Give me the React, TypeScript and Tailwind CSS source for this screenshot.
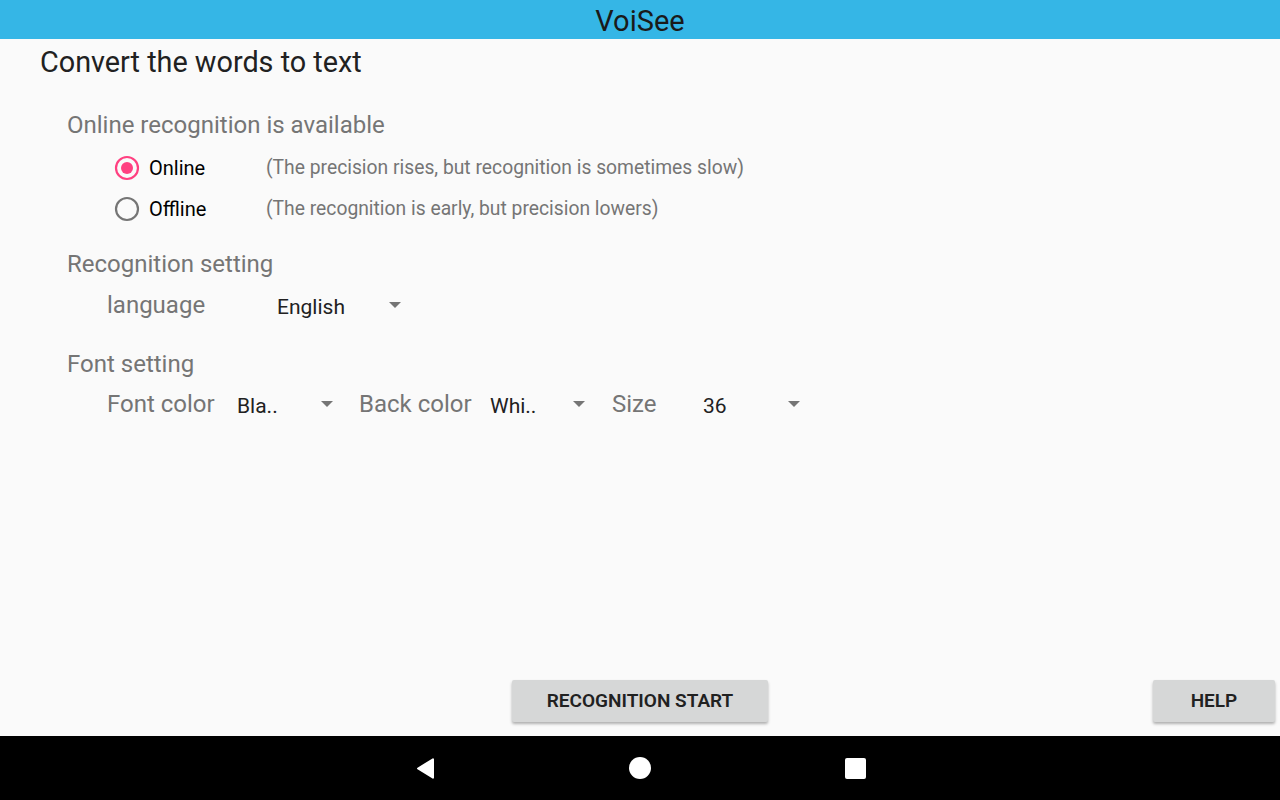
const Arrow = () => (
  <svg width="14" height="8" viewBox="0 0 14 8" className="shrink-0">
    <path d="M1 1h12L7 7z" fill="#757575" />
  </svg>
);

const Radio = ({ checked }: { checked: boolean }) => (
  <svg width="26" height="26" viewBox="0 0 26 26" className="shrink-0">
    <circle cx="13" cy="13" r="11" fill="none" stroke={checked ? "#ff4081" : "#757575"} strokeWidth="2.2" />
    {checked && <circle cx="13" cy="13" r="6" fill="#ff4081" />}
  </svg>
);

const App = () => {
  return (
    <div className="w-[1280px] h-[800px] flex flex-col bg-[#fafafa] overflow-hidden" style={{ fontFamily: "Roboto, 'Liberation Sans', sans-serif" }}>
      <div className="h-[39px] bg-[#35b6e6] flex items-center justify-center">
        <span className="text-[29px] text-[#1a1a1a] leading-none pt-[3px]">VoiSee</span>
      </div>

      <div className="flex-1 flex flex-col">
        <h1 className="ml-[40px] mt-[6px] text-[28.8px] text-[#212121] leading-[34px]">Convert the words to text</h1>

        <div className="ml-[67px] mt-[31px] flex flex-col">
          <div className="text-[24px] text-[#757575] leading-[30px]">Online recognition is available</div>

          <div className="ml-[47px] mt-[15px] flex flex-col gap-[15px]">
            <div className="flex items-center h-[26px]">
              <Radio checked />
              <span className="ml-[9px] w-[117px] text-[20px] text-black">Online</span>
              <span className="text-[19.3px] text-[#757575]">(The precision rises, but recognition is sometimes slow)</span>
            </div>
            <div className="flex items-center h-[26px]">
              <Radio checked={false} />
              <span className="ml-[9px] w-[117px] text-[20px] text-black">Offline</span>
              <span className="text-[19.3px] text-[#757575]">(The recognition is early, but precision lowers)</span>
            </div>
          </div>

          <div className="mt-[27px] text-[24px] text-[#757575] leading-[30px]">Recognition setting</div>
          <div className="ml-[40px] mt-[10px] flex items-center h-[32px]">
            <span className="w-[170px] text-[24px] text-[#757575]">language</span>
            <span className="w-[111px] text-[21px] text-[#212121] pt-[5px]">English</span>
            <Arrow />
          </div>

          <div className="mt-[28px] text-[24px] text-[#757575] leading-[30px]">Font setting</div>
          <div className="ml-[40px] mt-[9px] flex items-center h-[32px]">
            <span className="w-[130px] text-[24px] text-[#757575]">Font color</span>
            <span className="w-[83px] text-[21px] text-[#212121] pt-[5px]">Bla..</span>
            <Arrow />
            <span className="ml-[25px] w-[131px] text-[24px] text-[#757575]">Back color</span>
            <span className="w-[82px] text-[21px] text-[#212121] pt-[5px]">Whi..</span>
            <Arrow />
            <span className="ml-[26px] w-[91px] text-[24px] text-[#757575]">Size</span>
            <span className="w-[84px] text-[21px] text-[#212121] pt-[5px]">36</span>
            <Arrow />
          </div>
        </div>

        <div className="mt-auto mb-[14px] flex items-center h-[42px]">
          <div className="w-[512px]" />
          <button className="w-[256px] h-[42px] bg-[#d6d7d7] rounded-[2px] shadow-[0_2px_3px_rgba(0,0,0,0.3)] text-[19px] font-semibold text-[#212121]">
            RECOGNITION START
          </button>
          <div className="flex-1" />
          <button className="mr-[5px] w-[122px] h-[42px] bg-[#d6d7d7] rounded-[2px] shadow-[0_2px_3px_rgba(0,0,0,0.3)] text-[19px] font-semibold text-[#212121]">
            HELP
          </button>
        </div>
      </div>

      <div className="h-[64px] bg-black flex items-center justify-center gap-[193px]">
        <div className="w-[22px] flex justify-center">
          <svg width="19" height="21" viewBox="0 0 19 21">
            <path d="M18 1.3v18.4a1 1 0 0 1-1.5.9L1.5 11.3a1 1 0 0 1 0-1.6L16.5.4A1 1 0 0 1 18 1.3z" fill="#fff" />
          </svg>
        </div>
        <div className="w-[22px] h-[22px] rounded-full bg-white" />
        <div className="w-[22px] flex justify-center">
          <div className="w-[21px] h-[21px] rounded-[2px] bg-white" />
        </div>
      </div>
    </div>
  );
};

export default App;
